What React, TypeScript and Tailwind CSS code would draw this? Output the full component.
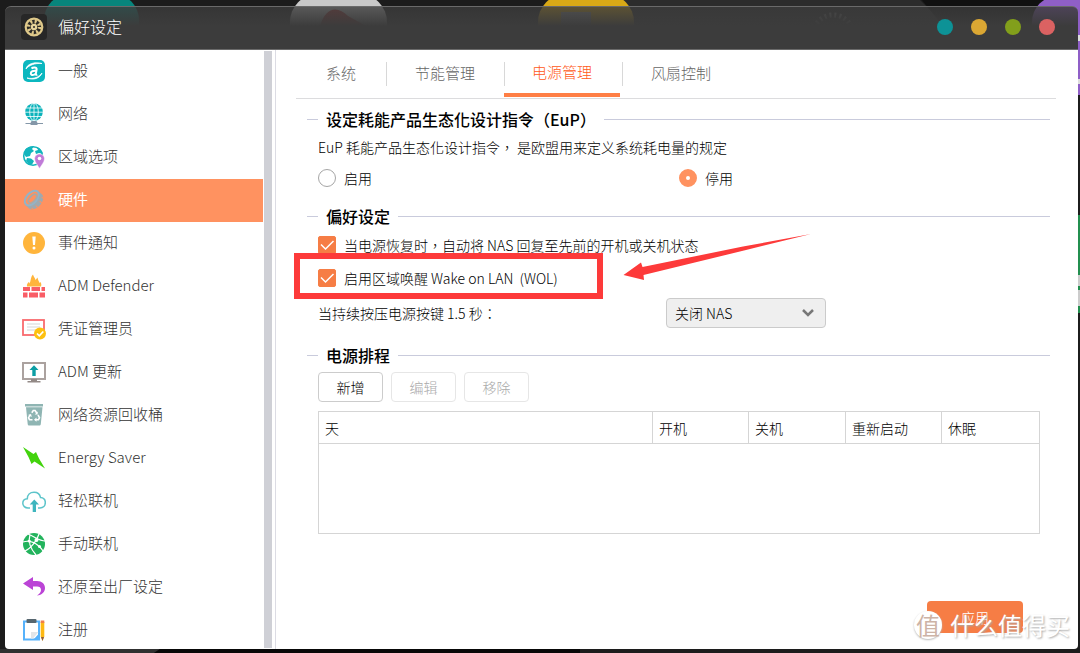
import { useState } from 'react';
import type { ReactNode } from 'react';

function GeneralIcon() {
  return (
    <svg width="24" height="24" viewBox="0 0 24 24" fill="none" aria-hidden="true">
      <rect x="1" y="1" width="22" height="22" rx="5" fill="#0bb7bf" />
      <path d="M4 10C5 5 12 2.500 20 4.500C13 4 7 6 4 10Z" fill="#fff" stroke="#fff" strokeWidth="0.800" />
      <path d="M20 14C18 19.500 11 21.500 5 19C12 20.500 17 18 20 14Z" fill="#fff" stroke="#fff" strokeWidth="0.800" />
      <path d="M9.500 9.600C11 8.200 15 8 14.600 10.500L13.800 15.200C13.700 16 14.500 16 15.300 15.600M14.200 11.800C11 11.600 8.800 12.300 8.800 14.300C8.800 16.600 12.500 16.500 13.900 14.300" stroke="#fff" strokeWidth="2" />
    </svg>
  );
}

function NetworkIcon() {
  return (
    <svg width="24" height="24" viewBox="0 0 24 24" fill="none" aria-hidden="true">
      <circle cx="12" cy="10" r="8.800" fill="#0bb3bb" />
      <g stroke="#fff" strokeWidth="0.800">
        <ellipse cx="12" cy="10" rx="4.300" ry="8.800" />
        <path d="M12 1v18M4 6h16M3 10.200h18M4 14.500h16" />
      </g>
      <path d="M9.500 19h5l1 2H21v1h-5l-1 1H9l-1-1H3.500v-1h5z" fill="#8497a8" />
    </svg>
  );
}

function RegionIcon() {
  return (
    <svg width="24" height="24" viewBox="0 0 24 24" fill="none" aria-hidden="true">
      <circle cx="11" cy="11" r="9.300" stroke="#13b5bd" strokeWidth="1.600" />
      <path d="M3 5C5 2 9 .900 12 1.200L10 4L12 6L9 8L8 11L4 12L2 9Z" fill="#13b5bd" />
      <path d="M15 2C18 3 20.500 6 21 9L17 8L14 9L13 6L16 5Z" fill="#13b5bd" />
      <path d="M5 13L9 13.500L12 16L10 19.500L7 19L4 16Z" fill="#13b5bd" />
      <path d="M17.500 9C14.500 9 12.600 11.200 12.600 13.700C12.600 17 15.500 20 17.500 23.500C19.500 20 22.500 17 22.500 13.700C22.500 11.200 20.500 9 17.500 9Z" fill="#c07bd8" stroke="#fff" strokeWidth="0.500" />
      <circle cx="17.500" cy="13.500" r="1.800" fill="#fff" />
    </svg>
  );
}

function HardwareIcon() {
  return (
    <svg width="24" height="24" viewBox="0 0 24 24" fill="none" aria-hidden="true">
      <g transform="rotate(-48 12 12)">
        <path d="M2.500 9v5C2.500 17.500 7 20 12 20S21.500 17.500 21.500 14V9z" fill="#9fa9ae" />
        <ellipse cx="12" cy="9" rx="8.700" ry="5.200" fill="#ff9260" stroke="#93b3c6" strokeWidth="2" />
        <ellipse cx="12" cy="10" rx="5.400" ry="2.700" stroke="#a8a9a6" strokeWidth="1.600" />
        <path d="M4.500 15.500v3M9 17v3M15 17v3M19.500 15.500v3" stroke="#ff9260" strokeWidth="1" />
      </g>
    </svg>
  );
}

function EventIcon() {
  return (
    <svg width="24" height="24" viewBox="0 0 24 24" aria-hidden="true">
      <circle cx="12" cy="12" r="11" fill="#ffb53c" />
      <path d="M10.300 5.500h3.400l-.700 8.500h-2z" fill="#fff" />
      <circle cx="12" cy="17" r="1.500" fill="#fff" />
    </svg>
  );
}

function DefenderIcon() {
  return (
    <svg width="24" height="24" viewBox="0 0 24 24" aria-hidden="true">
      <path d="M5 12.500C4.500 10.500 5.500 9 7 8L7.500 9.500C9 7 8.500 3 11 0.500C11.500 3 13 3.500 13.500 6L15.500 3.500C16 6 17 7.500 17.500 9L18.500 8C19.500 9.500 19.500 11 19 12.500Z" fill="#ffb53c" />
      <path d="M1 13h7v4H1zM9.500 13H18v4H9.500zM19.500 13H23v4h-3.500zM1 18.500h4.500v5H1zM7 18.500h9v5H7zM17.500 18.500H23v5h-5.500z" fill="#f95d66" />
    </svg>
  );
}

function CertificateIcon() {
  return (
    <svg width="24" height="24" viewBox="0 0 24 24" fill="none" aria-hidden="true">
      <rect x="1" y="3" width="21" height="15" fill="#fff" stroke="#f96a6e" strokeWidth="1.800" />
      <path d="M5 7h13M5 10h13M5 13h8" stroke="#d3d6d8" strokeWidth="1.200" />
      <circle cx="18" cy="16.500" r="6" fill="#fdc00f" />
      <path d="M15 16.500l2.300 2.300 4-4.300" stroke="#fff" strokeWidth="1.700" />
    </svg>
  );
}

function UpdateIcon() {
  return (
    <svg width="24" height="24" viewBox="0 0 24 24" fill="none" aria-hidden="true">
      <rect x="1" y="3" width="22" height="16" fill="#fff" stroke="#aba29f" strokeWidth="2" />
      <path d="M9 19h6v2h3.500v1.500h-13V21H9z" fill="#938a87" />
      <path d="M12 5.300L16.500 10h-2.800v6h-3.400v-6H7.500z" fill="#0c9ea4" />
    </svg>
  );
}

function RecycleIcon() {
  return (
    <svg width="24" height="24" viewBox="0 0 24 24" fill="none" aria-hidden="true">
      <path d="M3 1h18v2.500H3z" fill="#8fb5b3" />
      <path d="M4 4.300h16.500L18.800 21C18.700 22 18 22.500 17.200 22.500H7.300C6.400 22.500 5.800 22 5.700 21z" fill="#8fb5b3" />
      <path d="M9.800 9.800L11.300 7.500h1.800l1.800 2.800M16 12l1.500 2.700-1 2H13.500M10.500 16.700H7.500l-1-2L8.300 11.800" stroke="#fff" strokeWidth="1.600" />
      <path d="M15.700 8.500v3h-3zM14.500 14.500v4.300L12 16.700zM6 12l3-1 .8 3z" fill="#fff" />
    </svg>
  );
}

function EnergyIcon() {
  return (
    <svg width="24" height="24" viewBox="0 0 24 24" aria-hidden="true">
      <path d="M1 1L11.500 8L14 6L17 12.500L23 22.500L12.500 15.500L9.500 18L6.500 11Z" fill="#43d30d" />
    </svg>
  );
}

function CloudIcon() {
  return (
    <svg width="24" height="24" viewBox="0 0 24 24" fill="none" aria-hidden="true">
      <path d="M8 19H6C3 19 .800 17 .800 14.300C.800 11.800 2.600 10 5.300 9.800C5.300 6 8 3.200 12 3.200C15.500 3.200 18 5.500 18.500 8.500C21.500 8.700 23.300 11 23.300 13.600C23.300 16.600 21.200 19 18 19H16" stroke="#5cc4ca" strokeWidth="1.500" />
      <path d="M12.300 10.500L17 15.500h-3V23h-3.300v-7.500h-3z" fill="#3fb6be" />
    </svg>
  );
}

function ManualIcon() {
  return (
    <svg width="24" height="24" viewBox="0 0 24 24" fill="none" aria-hidden="true">
      <circle cx="12" cy="12" r="11" fill="#22b35c" />
      <g stroke="#fff" strokeWidth="1.200">
        <path d="M1 10C7 8 15 10 21 19M6 2C13 5 18 9 23 9M3 19C8 17 15 9 17 2M8 2.500C6 9 8 16 14 23" />
      </g>
      <circle cx="14.500" cy="8" r="2" fill="#fff" />
      <circle cx="7.200" cy="9" r="1.600" fill="#fff" />
      <circle cx="17.500" cy="14.500" r="1.500" fill="#fff" />
    </svg>
  );
}

function RestoreIcon() {
  return (
    <svg width="24" height="24" viewBox="0 0 24 24" aria-hidden="true">
      <path d="M1 8.500L11 2V6H15C20 6 23 9 23 13C23 17 20 20 15 20.500C17.500 19 19 17 19 15C19 12.500 17.500 11.500 15 11.500H11V15Z" fill="#bb44d6" />
    </svg>
  );
}

function RegisterIcon() {
  return (
    <svg width="24" height="24" viewBox="0 0 24 24" fill="none" aria-hidden="true">
      <path d="M2 3.500h15v18H2z" fill="#fff" stroke="#56b2fb" strokeWidth="2" />
      <path d="M9 14h7.500L11 20.500H9z" fill="#e2e5e8" />
      <path d="M11 22l6.500-7v7z" fill="#56b2fb" />
      <rect x="4.500" y="1" width="10" height="4" rx="1" fill="#56666f" />
      <path d="M18.700 4h3.600v14.500L20.500 23l-1.800-4.500z" fill="#fdb813" />
      <path d="M18.700 2.500h3.600V5h-3.600z" fill="#ef7d4c" />
      <path d="M19 19h3l-1.500 4z" fill="#8a5a44" />
    </svg>
  );
}

function SettingsIcon() {
  return (
    <svg width="26" height="26" viewBox="0 0 26 26" fill="none" aria-hidden="true">
      <rect width="26" height="26" rx="4" fill="#272727" />
      <circle cx="13" cy="13" r="8.300" fill="#2b2a26" stroke="#dfc98a" strokeWidth="2.200" />
      <circle cx="13" cy="13" r="5.500" stroke="#dfc98a" strokeWidth="3.500" strokeDasharray="2 2.320" />
      <circle cx="13" cy="13" r="3.200" fill="#e6d49b" />
      <circle cx="13" cy="13" r="1" fill="#272727" />
    </svg>
  );
}

/* Desktop shortcuts that peek out behind the window. */
function Wallpaper() {
  return (
    <svg className="absolute inset-0 h-full w-full" fill="none" aria-hidden="true">
      <rect width="100%" height="100%" fill="#1c1c1c" />
      <path d="M600 0h320l60 60H560z" fill="#2c2c2c" />
      <path d="M922 0h158v60H970z" fill="#111" />
      <rect x="44" y="-6" width="95" height="80" rx="26" fill="#07857c" />
      <rect x="290" y="-6" width="97" height="80" rx="28" fill="#c9c9c9" />
      <path d="M320 26c6-20 18-20 28-10l18 10z" fill="#b23a3a" />
      <rect x="538" y="-6" width="96" height="80" rx="28" fill="#d9a916" />
      <path d="M561 12h30v20h-30z" fill="#999" />
      <circle cx="833" cy="35" r="20" stroke="#777" strokeWidth="5" strokeDasharray="2 3" />
      <rect x="1032" y="-4" width="96" height="99" rx="26" fill="#8f5fc7" />
      <path d="M1078 35h2v6h-2zM1078 79h2v5h-2z" fill="#ddd" />
      <path d="M1078 215h2v98h-2z" fill="#238f4f" />
      <path d="M1078 275h2v11h-2zM1078 290h2v16h-2z" fill="#ccc" />
      <path d="M0 649h160l-6 4H0z" fill="#303030" />
      <path d="M160 649h420v4H154z" fill="#080808" />
    </svg>
  );
}

interface MenuItem {
  label: string;
  icon: ReactNode;
}

const menu: MenuItem[] = [
  { label: '一般', icon: <GeneralIcon /> },
  { label: '网络', icon: <NetworkIcon /> },
  { label: '区域选项', icon: <RegionIcon /> },
  { label: '硬件', icon: <HardwareIcon /> },
  { label: '事件通知', icon: <EventIcon /> },
  { label: 'ADM Defender', icon: <DefenderIcon /> },
  { label: '凭证管理员', icon: <CertificateIcon /> },
  { label: 'ADM 更新', icon: <UpdateIcon /> },
  { label: '网络资源回收桶', icon: <RecycleIcon /> },
  { label: 'Energy Saver', icon: <EnergyIcon /> },
  { label: '轻松联机', icon: <CloudIcon /> },
  { label: '手动联机', icon: <ManualIcon /> },
  { label: '还原至出厂设定', icon: <RestoreIcon /> },
  { label: '注册', icon: <RegisterIcon /> },
];

const tabs = ['系统', '节能管理', '电源管理', '风扇控制'];

const columns = [
  { label: '天', width: 'w-auto' },
  { label: '开机', width: 'w-24' },
  { label: '关机', width: 'w-[97px]' },
  { label: '重新启动', width: 'w-24' },
  { label: '休眠', width: 'w-[98px]' },
];

function TitleBar() {
  return (
    <header className="flex h-11 shrink-0 items-center rounded-t-md border-t border-b border-[#6a6a6a] bg-linear-to-b from-[#3c3c3c]/80 to-[#3c3c3c] to-45% pr-[23px] pb-0.5 pl-4">
      <SettingsIcon />
      <h1 className="ml-[11px] pb-0.5 text-base font-light text-white">偏好设定</h1>
      <div className="ml-auto flex gap-[18px]">
        <button type="button" aria-label="Help" className="size-4 rounded-full bg-[#0d9296]" />
        <button type="button" aria-label="Minimize" className="size-4 rounded-full bg-[#dba733]" />
        <button type="button" aria-label="Maximize" className="size-4 rounded-full bg-[#829f1b]" />
        <button type="button" aria-label="Close" className="size-4 rounded-full bg-[#db6262]" />
      </div>
    </header>
  );
}

function Sidebar() {
  const [active, setActive] = useState('硬件');

  return (
    <aside className="flex shrink-0 overflow-hidden border-r border-[#dcdce4]">
      <nav className="w-[258px]">
        {menu.map((item) => (
          <button
            key={item.label}
            type="button"
            onClick={() => setActive(item.label)}
            className={
              item.label === active
                ? 'flex h-[43px] w-full items-center gap-3 bg-[#ff9260] pb-0.5 pl-[17px] text-[15px] text-white'
                : 'flex h-[43px] w-full items-center gap-3 pb-0.5 pl-[17px] text-[15px] font-light text-[#333]'
            }
          >
            {item.icon}
            {item.label}
          </button>
        ))}
      </nav>
      <div className="my-px mr-[3px] ml-px w-2 bg-[#cfd0d6]" />
    </aside>
  );
}

function TabBar() {
  const [active, setActive] = useState('电源管理');

  return (
    <div role="tablist" className="flex h-[49px] items-center border-b border-[#dcdcde] text-[15px] font-light">
      {tabs.map((tab, i) => (
        <div key={tab} className={i === 0 ? 'flex h-full w-[90px] items-center' : 'flex h-full w-[118px] items-center'}>
          {i > 0 && <span className="-mr-px h-6 w-px bg-[#d8d8d8]" />}
          <button
            type="button"
            role="tab"
            aria-selected={tab === active}
            onClick={() => setActive(tab)}
            className={
              tab === active
                ? 'mr-0.5 mb-px h-[47px] flex-1 border-b-4 border-[#ff7f45] pt-0.5 text-[#ff5a20]'
                : 'h-full flex-1 pb-0.5 text-[#666]'
            }
          >
            {tab}
          </button>
        </div>
      ))}
    </div>
  );
}

function Section({ title, children }: { title: string; children: ReactNode }) {
  return (
    <section>
      <div className="flex items-center gap-2">
        <span className="h-px w-[11px] bg-[#c9cbdc]" />
        <h2 className="text-base leading-6 font-medium text-black">{title}</h2>
        <span className="h-px flex-1 bg-[#c9cbdc]" />
      </div>
      <div className="pl-[11px]">{children}</div>
    </section>
  );
}

function Radio({ label, checked, onChange }: { label: string; checked: boolean; onChange: () => void }) {
  return (
    <label className="flex items-center gap-2">
      <input
        type="radio"
        name="eup"
        checked={checked}
        onChange={onChange}
        className="size-[18px] appearance-none rounded-full border border-[#a5a5a5] bg-white checked:border-[7px] checked:border-[#ff9260]"
      />
      {label}
    </label>
  );
}

function Checkbox({ label }: { label: string }) {
  return (
    <label className="flex h-[33px] items-center gap-2">
      <span className="grid size-[18px] place-items-center">
        <input
          type="checkbox"
          defaultChecked
          className="peer col-start-1 row-start-1 size-[18px] appearance-none rounded-xs border border-[#aaa] checked:border-[#f67d45] checked:bg-[#f67d45]"
        />
        <svg
          width="18"
          height="18"
          viewBox="0 0 18 18"
          fill="none"
          stroke="#fff"
          strokeWidth="1.500"
          className="pointer-events-none col-start-1 row-start-1 opacity-0 peer-checked:opacity-100"
          aria-hidden="true"
        >
          <path d="M3 8.500l4.500 4.500L15.500 5" />
        </svg>
      </span>
      <span className="whitespace-pre">{label}</span>
    </label>
  );
}

function ScheduleTable() {
  return (
    <table className="mt-[9px] w-[calc(100%-10px)] table-fixed border-collapse border border-[#d5d5d5]">
      <thead>
        <tr className="h-8">
          {columns.map((c) => (
            <th key={c.label} scope="col" className={`${c.width} border border-[#d5d5d5] px-1.5 text-left font-light`}>
              {c.label}
            </th>
          ))}
        </tr>
      </thead>
      <tbody>
        <tr className="h-[90px]">
          <td colSpan={5} />
        </tr>
      </tbody>
    </table>
  );
}

function PowerPanel() {
  const [eup, setEup] = useState(false);

  return (
    <div className="pt-2 pr-1.5 pl-[11px] text-sm font-light text-black">
      <Section title="设定耗能产品生态化设计指令（EuP）">
        <p className="mt-1 leading-6">EuP 耗能产品生态化设计指令， 是欧盟用来定义系统耗电量的规定</p>
        <div className="mt-[7px] flex h-6 items-center">
          <div className="w-[361px]">
            <Radio label="启用" checked={eup} onChange={() => setEup(true)} />
          </div>
          <Radio label="停用" checked={!eup} onChange={() => setEup(false)} />
        </div>
      </Section>

      <div className="mt-3.5">
        <Section title="偏好设定">
          <Checkbox label="当电源恢复时，自动将 NAS 回复至先前的开机或关机状态" />
          <div className="relative">
            <Checkbox label="启用区域唤醒 Wake on LAN  (WOL)" />
            <div className="pointer-events-none absolute -top-2 -left-6 h-[46px] w-[309px] border-6 border-[#fd3a3a]" />
            <svg
              width="190"
              height="48"
              viewBox="0 0 190 48"
              className="pointer-events-none absolute -top-7 left-[305px]"
              aria-hidden="true"
            >
              <path d="M0.500 42L18 29.500L19.500 34L120 13.500L188 1L121 17.500L20.500 42L21 47Z" fill="#fd3a3a" />
            </svg>
          </div>
          <div className="mt-1 flex items-center">
            <label htmlFor="power-key" className="w-[348px]">
              当持续按压电源按键 1.5 秒：
            </label>
            <div className="grid w-40 items-center">
              <select
                id="power-key"
                className="col-start-1 row-start-1 h-[30px] w-full appearance-none rounded-sm border border-[#cbcbcb] bg-[#efefef] px-2"
              >
                <option>关闭 NAS</option>
              </select>
              <svg
                width="12"
                height="8"
                viewBox="0 0 12 8"
                fill="none"
                stroke="#777"
                strokeWidth="2.500"
                className="pointer-events-none col-start-1 row-start-1 mr-3 justify-self-end"
                aria-hidden="true"
              >
                <path d="M1 1l5 5 5-5" />
              </svg>
            </div>
          </div>
        </Section>
      </div>

      <div className="mt-[15px]">
        <Section title="电源排程">
          <div className="mt-[5px] flex gap-2">
            <button type="button" className="h-[30px] w-[65px] rounded-sm border border-[#ccc] bg-white">
              新增
            </button>
            <button type="button" disabled className="h-[30px] w-[65px] rounded-sm border border-[#e6e6e6] bg-white text-[#aaa]">
              编辑
            </button>
            <button type="button" disabled className="h-[30px] w-[65px] rounded-sm border border-[#e6e6e6] bg-white text-[#aaa]">
              移除
            </button>
          </div>
          <ScheduleTable />
        </Section>
      </div>
    </div>
  );
}

function Watermark() {
  return (
    <div className="pointer-events-none absolute right-2 bottom-2 flex items-center gap-2 text-white">
      <span className="flex size-7 items-center justify-center rounded-full bg-white text-2xl text-[#cdb3a6] shadow-[0_1px_2px_#bbb]">
        值
      </span>
      <span className="text-2xl leading-8 [text-shadow:1px_1px_2px_#aaa]">什么值得买</span>
    </div>
  );
}

export default function App() {
  return (
    <div
      lang="zh-TW"
      className="relative h-screen overflow-hidden pt-1.5 pr-0.5 pb-1 pl-[5px] font-['Noto_Sans_CJK_TC',sans-serif]"
    >
      <Wallpaper />
      <div className="relative flex h-full flex-col">
        <TitleBar />
        <div className="flex min-h-0 flex-1 overflow-hidden rounded-b-sm bg-white">
          <Sidebar />
          <main className="flex min-w-0 flex-1 flex-col pr-[22px] pl-5">
            <TabBar />
            <PowerPanel />
            <button
              type="button"
              className="mt-auto mr-[33px] mb-4 h-8 w-24 shrink-0 self-end rounded-sm bg-[#f67d45] text-sm font-light text-white"
            >
              应用
            </button>
          </main>
        </div>
        <Watermark />
      </div>
    </div>
  );
}
